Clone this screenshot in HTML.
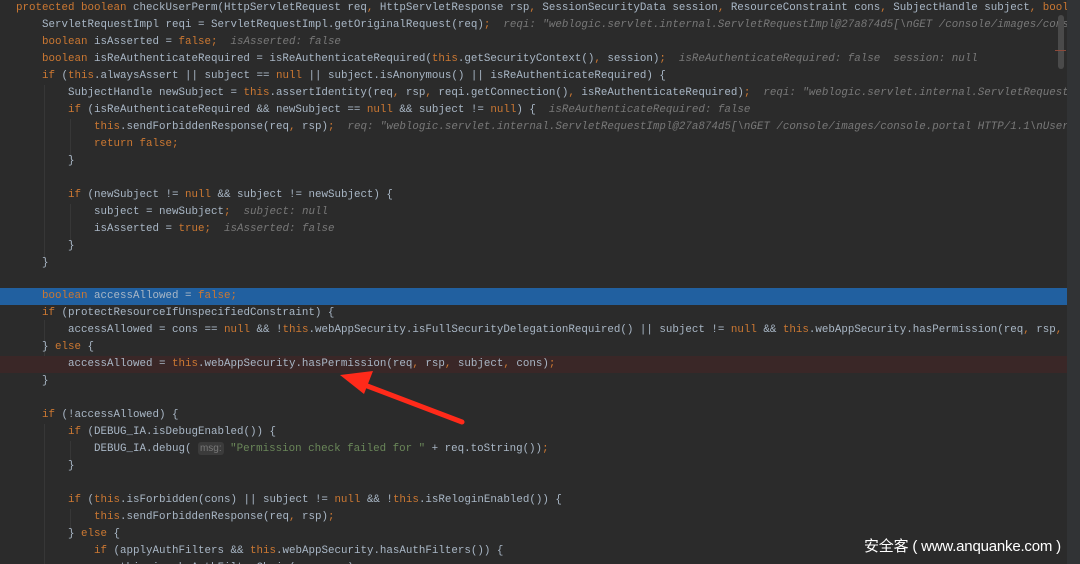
<!DOCTYPE html>
<html><head><meta charset="utf-8"><style>
html,body{margin:0;width:1080px;height:564px;overflow:hidden;}
body{background:#2b2b2b;position:relative;font-family:"Liberation Mono",monospace;}
.l{position:absolute;left:0;width:1067px;height:17px;line-height:17px;font-size:10.83px;color:#a9b7c6;white-space:pre;overflow:hidden;}
.l span.t{position:absolute;top:0;}
.k{color:#cc7832}.s{color:#6a8759}.h{color:#787878;font-style:italic}
.hl{background:#2160a0}.rd{background:#3a2727}
.g{position:absolute;width:1px;background:#373737}
.hint{display:inline-block;background:#3b3b3b;color:#787878;border-radius:3px;padding:0 2px;line-height:13px;font-size:10px;font-family:"Liberation Sans",sans-serif}
</style></head><body>
<div class="g" style="left:44px;top:85px;height:175px"></div>
<div class="g" style="left:70px;top:119px;height:40px"></div>
<div class="g" style="left:70px;top:204px;height:40px"></div>
<div class="g" style="left:44px;top:320px;height:52px"></div>
<div class="g" style="left:44px;top:424px;height:140px"></div>
<div class="g" style="left:70px;top:441px;height:20px"></div>
<div class="g" style="left:70px;top:509px;height:20px"></div>

<div class="l" style="top:0"><span class="t" style="left:16px"><span class="k">protected boolean </span>checkUserPerm(HttpServletRequest req<span class="k">, </span>HttpServletResponse rsp<span class="k">, </span>SessionSecurityData session<span class="k">, </span>ResourceConstraint cons<span class="k">, </span>SubjectHandle subject<span class="k">, boole</span></span></div>
<div class="l" style="top:17px"><span class="t" style="left:42px">ServletRequestImpl reqi = ServletRequestImpl.getOriginalRequest(req)<span class="k">;</span>  <span class="h">reqi: "weblogic.servlet.internal.ServletRequestImpl@27a874d5[\nGET /console/images/console</span></span></div>
<div class="l" style="top:34px"><span class="t" style="left:42px"><span class="k">boolean </span>isAsserted = <span class="k">false;</span>  <span class="h">isAsserted: false</span></span></div>
<div class="l" style="top:51px"><span class="t" style="left:42px"><span class="k">boolean </span>isReAuthenticateRequired = isReAuthenticateRequired(<span class="k">this</span>.getSecurityContext()<span class="k">, </span>session)<span class="k">;</span>  <span class="h">isReAuthenticateRequired: false  session: null</span></span></div>
<div class="l" style="top:68px"><span class="t" style="left:42px"><span class="k">if </span>(<span class="k">this</span>.alwaysAssert || subject == <span class="k">null </span>|| subject.isAnonymous() || isReAuthenticateRequired) {</span></div>
<div class="l" style="top:85px"><span class="t" style="left:68px">SubjectHandle newSubject = <span class="k">this</span>.assertIdentity(req<span class="k">, </span>rsp<span class="k">, </span>reqi.getConnection()<span class="k">, </span>isReAuthenticateRequired)<span class="k">;</span>  <span class="h">reqi: "weblogic.servlet.internal.ServletRequestI</span></span></div>
<div class="l" style="top:102px"><span class="t" style="left:68px"><span class="k">if </span>(isReAuthenticateRequired &amp;&amp; newSubject == <span class="k">null </span>&amp;&amp; subject != <span class="k">null</span>) {  <span class="h">isReAuthenticateRequired: false</span></span></div>
<div class="l" style="top:119px"><span class="t" style="left:94px"><span class="k">this</span>.sendForbiddenResponse(req<span class="k">, </span>rsp)<span class="k">;</span>  <span class="h">req: "weblogic.servlet.internal.ServletRequestImpl@27a874d5[\nGET /console/images/console.portal HTTP/1.1\nUser-</span></span></div>
<div class="l" style="top:136px"><span class="t" style="left:94px"><span class="k">return false;</span></span></div>
<div class="l" style="top:153px"><span class="t" style="left:68px">}</span></div>
<div class="l" style="top:187px"><span class="t" style="left:68px"><span class="k">if </span>(newSubject != <span class="k">null </span>&amp;&amp; subject != newSubject) {</span></div>
<div class="l" style="top:204px"><span class="t" style="left:94px">subject = newSubject<span class="k">;</span>  <span class="h">subject: null</span></span></div>
<div class="l" style="top:221px"><span class="t" style="left:94px">isAsserted = <span class="k">true;</span>  <span class="h">isAsserted: false</span></span></div>
<div class="l" style="top:238px"><span class="t" style="left:68px">}</span></div>
<div class="l" style="top:255px"><span class="t" style="left:42px">}</span></div>
<div class="l hl" style="top:288px"><span class="t" style="left:42px"><span class="k">boolean </span>accessAllowed = <span class="k">false;</span></span></div>
<div class="l" style="top:305px"><span class="t" style="left:42px"><span class="k">if </span>(protectResourceIfUnspecifiedConstraint) {</span></div>
<div class="l" style="top:322px"><span class="t" style="left:68px">accessAllowed = cons == <span class="k">null </span>&amp;&amp; !<span class="k">this</span>.webAppSecurity.isFullSecurityDelegationRequired() || subject != <span class="k">null </span>&amp;&amp; <span class="k">this</span>.webAppSecurity.hasPermission(req<span class="k">, </span>rsp<span class="k">, </span>s</span></div>
<div class="l" style="top:339px"><span class="t" style="left:42px">} <span class="k">else </span>{</span></div>
<div class="l rd" style="top:356px"><span class="t" style="left:68px">accessAllowed = <span class="k">this</span>.webAppSecurity.hasPermission(req<span class="k">, </span>rsp<span class="k">, </span>subject<span class="k">, </span>cons)<span class="k">;</span></span></div>
<div class="l" style="top:373px"><span class="t" style="left:42px">}</span></div>
<div class="l" style="top:407px"><span class="t" style="left:42px"><span class="k">if </span>(!accessAllowed) {</span></div>
<div class="l" style="top:424px"><span class="t" style="left:68px"><span class="k">if </span>(DEBUG_IA.isDebugEnabled()) {</span></div>
<div class="l" style="top:441px"><span class="t" style="left:94px">DEBUG_IA.debug( <span class="hint">msg:</span> <span class="s">"Permission check failed for "</span> + req.toString())<span class="k">;</span></span></div>
<div class="l" style="top:458px"><span class="t" style="left:68px">}</span></div>
<div class="l" style="top:492px"><span class="t" style="left:68px"><span class="k">if </span>(<span class="k">this</span>.isForbidden(cons) || subject != <span class="k">null </span>&amp;&amp; !<span class="k">this</span>.isReloginEnabled()) {</span></div>
<div class="l" style="top:509px"><span class="t" style="left:94px"><span class="k">this</span>.sendForbiddenResponse(req<span class="k">, </span>rsp)<span class="k">;</span></span></div>
<div class="l" style="top:526px"><span class="t" style="left:68px">} <span class="k">else </span>{</span></div>
<div class="l" style="top:543px"><span class="t" style="left:94px"><span class="k">if </span>(applyAuthFilters &amp;&amp; <span class="k">this</span>.webAppSecurity.hasAuthFilters()) {</span></div>
<div class="l" style="top:560px"><span class="t" style="left:120px">this.invokeAuthFilterChain(req, rsp);</span></div>

<div style="position:absolute;left:1067px;top:0;width:13px;height:564px;background:#313335"></div>
<div style="position:absolute;left:1058px;top:15px;width:6px;height:54px;background:#4a4a4a;border-radius:3px"></div>
<div style="position:absolute;left:1055px;top:50px;width:11px;height:1px;background:#8c4a3a"></div>

<svg style="position:absolute;left:0;top:0" width="1080" height="564">
<line x1="462" y1="422" x2="362" y2="384" stroke="#ff2a1a" stroke-width="5" stroke-linecap="round"/>
<polygon points="340,375 373,371 364,394" fill="#ff2a1a"/>
</svg>
<div style="position:absolute;left:864px;top:535px;font-family:'Liberation Sans','Noto Sans CJK SC',sans-serif;font-size:15px;color:#fff;white-space:nowrap;letter-spacing:-0.2px">安全客 ( www.anquanke.com )</div>
</body></html>
